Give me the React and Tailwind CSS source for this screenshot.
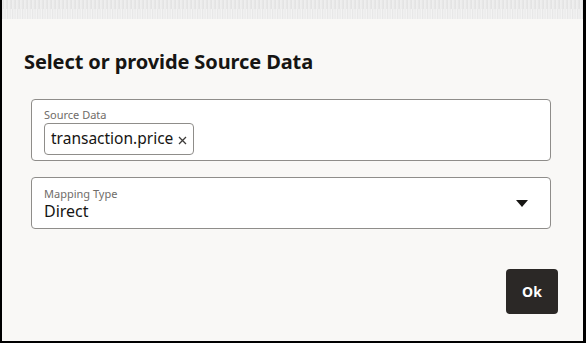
import React from 'react';

export default function App() {
  return (
    <div className="w-[586px] h-[343px] overflow-hidden flex flex-col bg-[#f9f8f6] border-l-2 border-r-[3px] border-b-2 border-black font-['Noto_Sans',sans-serif] text-[#161513]">
      {/* torn top edge */}
      <div className="h-[19px] shrink-0 bg-[repeating-linear-gradient(90deg,#e4e4e4_0px,#f3f3f3_2px,#e9e9e9_3px,#f6f6f6_5px)]">
        <div className="h-[9px] bg-[repeating-linear-gradient(90deg,#efefef_0px,#dedede_1px,#f4f4f4_3px,#e6e6e6_4px)]" />
      </div>

      <h1 className="mt-[29px] ml-[22px] text-[20px] leading-[28px] font-bold tracking-[-0.1px]">
        Select or provide Source Data
      </h1>

      <div className="ml-[29px] mt-[23px] w-[520px] flex flex-col gap-4">
        {/* Source Data */}
        <div className="h-[62px] bg-white border border-[#8f8d8a] rounded-[4px] px-3 pt-[8px]">
          <div className="text-[11px] leading-[14px] text-[#6f6c69]">Source Data</div>
          <div className="mt-px inline-flex items-center h-[32px] pl-[6px] pr-[6px] border border-[#8f8d8a] rounded-[4px] text-[15.5px] leading-none">
            <span>transaction.price</span>
            <svg width="9" height="9" viewBox="0 0 9 9" className="ml-[5px] mt-[2px]">
              <path d="M1 1 L8 8 M8 1 L1 8" stroke="#3d3b39" strokeWidth="1.3" />
            </svg>
          </div>
        </div>

        {/* Mapping Type */}
        <div className="h-[52px] bg-white border border-[#8f8d8a] rounded-[4px] pl-3 pr-[22px] pt-[9px] flex items-start justify-between">
          <div>
            <div className="text-[11px] leading-[14px] text-[#6f6c69]">Mapping Type</div>
            <div className="text-[16px] leading-[20px]">Direct</div>
          </div>
          <svg width="12" height="7" viewBox="0 0 12 7" className="mt-[13px]">
            <path d="M0 0 H12 L6 7 Z" fill="#161513" />
          </svg>
        </div>
      </div>

      <div className="flex justify-end mt-[40px] mr-[25px]">
        <button className="w-[52px] h-[45px] rounded-[4px] bg-[#2b2826] text-white text-[14px] font-bold">
          Ok
        </button>
      </div>
    </div>
  );
}
